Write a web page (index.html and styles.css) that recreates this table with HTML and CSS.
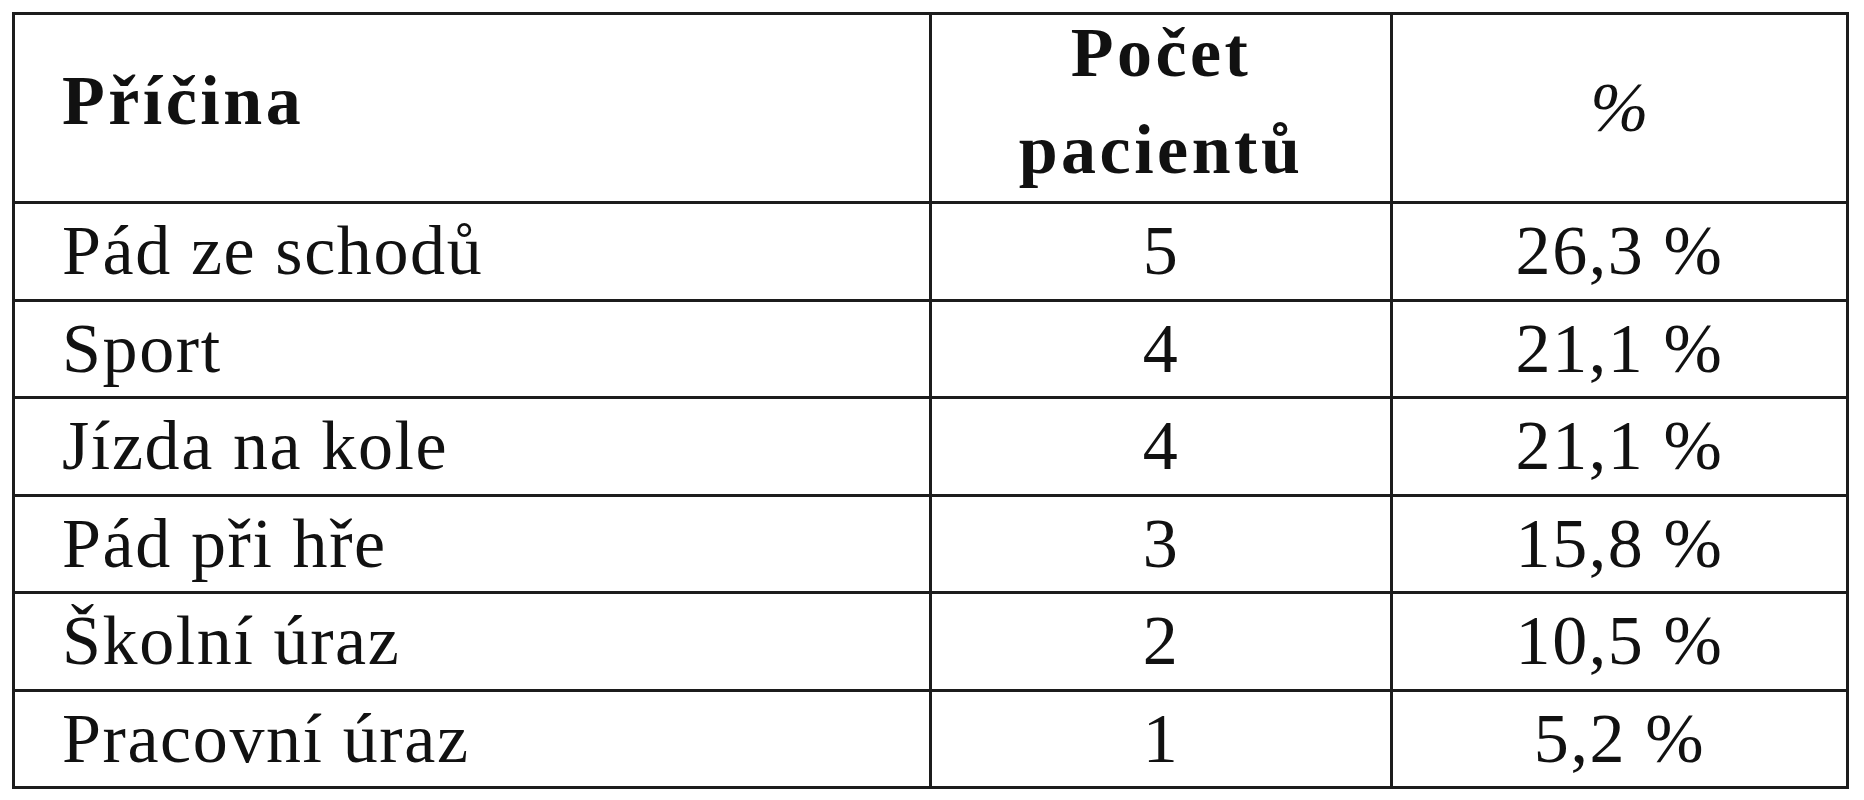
FILE: index.html
```html
<!DOCTYPE html>
<html lang="cs">
<head>
<meta charset="utf-8">
<title>Příčina úrazu</title>
<link rel="stylesheet" href="styles.css">
</head>
<body>
<div class="page">
  <table class="data">
    <thead>
      <tr>
        <th class="c-cause"><span class="h-cause">Příčina</span></th>
        <th class="c-count"><div class="h-count">Počet<br>pacientů</div></th>
        <th class="c-pct"><span class="h-pct">%</span></th>
      </tr>
    </thead>
    <tbody>
      <tr><td class="c-cause">Pád ze schodů</td><td class="c-count">5</td><td class="c-pct">26,3 %</td></tr>
      <tr><td class="c-cause">Sport</td><td class="c-count">4</td><td class="c-pct">21,1 %</td></tr>
      <tr><td class="c-cause">Jízda na kole</td><td class="c-count">4</td><td class="c-pct">21,1 %</td></tr>
      <tr><td class="c-cause">Pád při hře</td><td class="c-count">3</td><td class="c-pct">15,8 %</td></tr>
      <tr><td class="c-cause">Školní úraz</td><td class="c-count">2</td><td class="c-pct">10,5 %</td></tr>
      <tr><td class="c-cause">Pracovní úraz</td><td class="c-count">1</td><td class="c-pct">5,2 %</td></tr>
    </tbody>
  </table>
</div>
</body>
</html>
```

FILE: styles.css
```css
html, body {
  margin: 0;
  padding: 0;
  background: #ffffff;
}

.page {
  padding: 12px 0 0 12px;
}

.data {
  width: 1837px;
  table-layout: fixed;
  border-collapse: separate;
  border-spacing: 0;
  border: 3px solid #1c1c1c;
  font-family: "Liberation Serif", "Times New Roman", serif;
  font-size: 70px;
  color: #111111;
  letter-spacing: 1.6px;
}

.data th,
.data td {
  box-sizing: border-box;
  padding: 0;
  vertical-align: middle;
  line-height: 1.15;
  white-space: nowrap;
}

.data th {
  height: 186px;
  font-weight: bold;
  letter-spacing: 3.5px;
}

.data td {
  height: 97.5px;
  border-top: 3px solid #1c1c1c;
}

.c-cause {
  width: 914px;
  text-align: left;
  padding-left: 47px !important;
}

.c-count {
  width: 461px;
  text-align: center;
  border-left: 3px solid #1c1c1c;
}

.c-pct {
  width: 456px;
  text-align: center;
  border-left: 3px solid #1c1c1c;
}

th.c-cause {
  padding-bottom: 14px !important;
}

.h-count {
  line-height: 97px;
  margin-top: -14px;
}

.h-pct {
  font-weight: normal;
  font-style: italic;
  letter-spacing: 0;
}
```
